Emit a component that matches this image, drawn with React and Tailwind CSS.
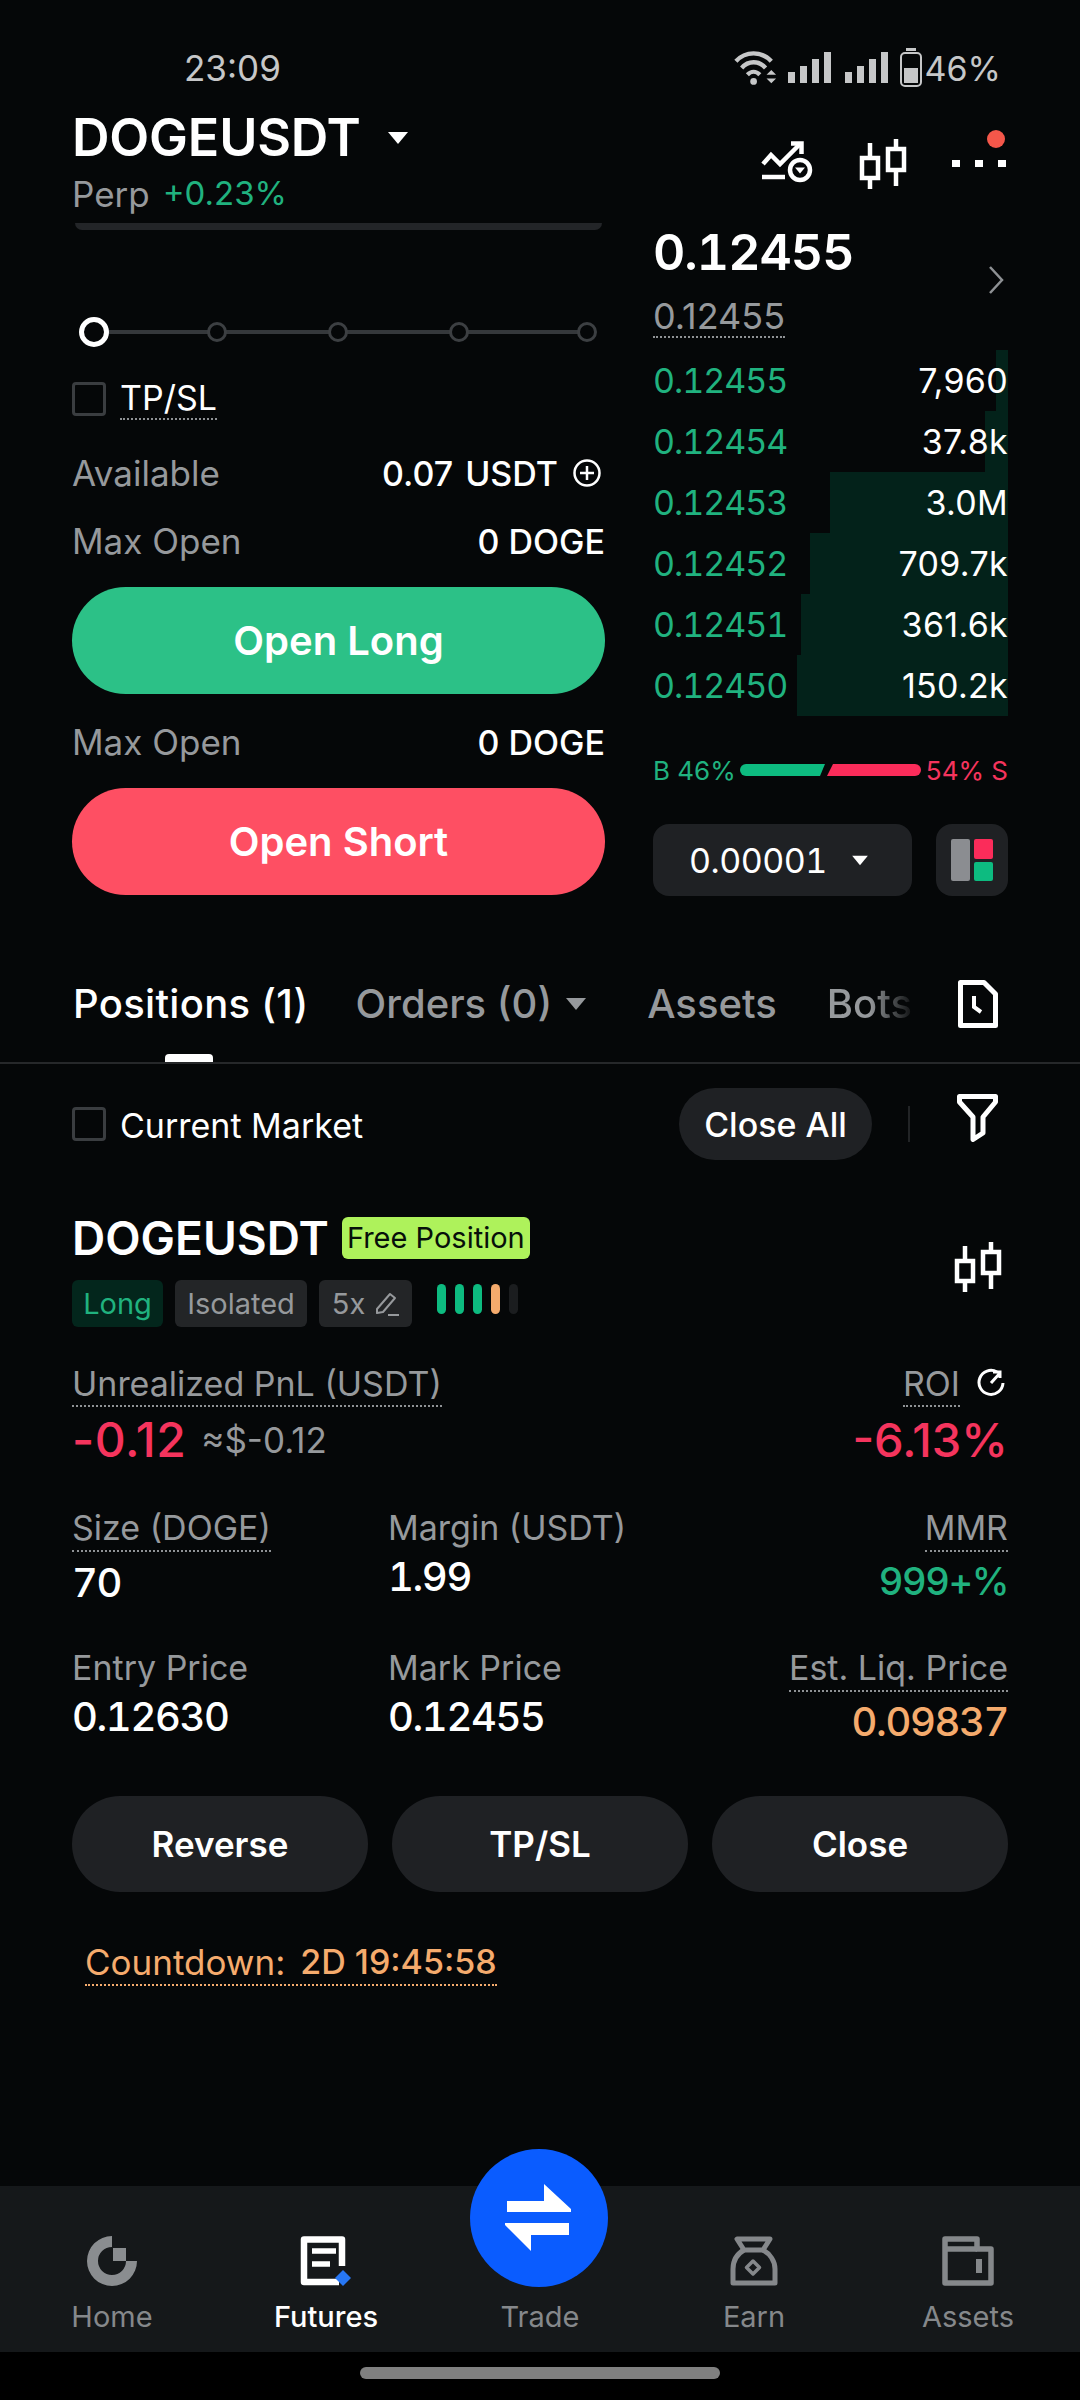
const Caret = ({ className, w = 22, h = 14, color = "#fff" }) => (
  <svg className={className} width={w} height={h} viewBox="0 0 22 14">
    <path d="M1 1H21L11 13Z" fill={color} />
  </svg>
);

const Candles = ({ className }) => (
  <svg className={className} width="48" height="52" viewBox="0 0 48 52" fill="none" stroke="#fff" strokeWidth="4.5">
    <rect x="3" y="20" width="16" height="20" />
    <path d="M11 5V20M11 40V51" />
    <rect x="29" y="11" width="16" height="21" />
    <path d="M37 1V11M37 32V48" />
  </svg>
);

const Check = () => <span className="block w-[34px] h-[34px] rounded-[4px] border-[3px] border-[#3a3d40]" />;

const Dotted = ({ children, className = "" }) => (
  <span className={`border-b-2 border-dotted border-[#8f9295] ${className}`}>{children}</span>
);

const StatusBar = () => (
  <div className="h-[100px] pt-[36px] pl-[184px] pr-[79px] flex items-center justify-between text-[#c6c7c8] text-[35px]">
    <span>23:09</span>
    <div className="flex items-center">
      <svg width="44" height="36" viewBox="0 0 46 36" fill="none" stroke="#c6c7c8" strokeWidth="4.5">
        <path d="M2 11C12 0 29 0 39 11" />
        <path d="M8 18C15 10 26 10 33 18" />
        <path d="M14 25C18 21 23 21 27 25" />
        <circle cx="20.500" cy="32" r="3.500" fill="#c6c7c8" stroke="none" />
        <path d="M34 25L39 20L44 25ZM34 29L39 34L44 29Z" fill="#c6c7c8" stroke="none" />
      </svg>
      <svg className="ml-[10px]" width="44" height="32" viewBox="0 0 44 32" fill="#c6c7c8">
        <rect x="0" y="20" width="7" height="11" /><rect x="12" y="14" width="7" height="17" />
        <rect x="24" y="7" width="7" height="24" /><rect x="36" y="0" width="7" height="31" />
      </svg>
      <svg className="ml-[13px]" width="44" height="32" viewBox="0 0 44 32" fill="#c6c7c8">
        <rect x="0" y="20" width="7" height="11" /><rect x="12" y="14" width="7" height="17" />
        <rect x="24" y="7" width="7" height="24" /><rect x="36" y="0" width="7" height="31" />
      </svg>
      <svg className="ml-[11px]" width="22" height="40" viewBox="0 0 22 40" fill="none">
        <rect x="6" y="0" width="10" height="3" fill="#c6c7c8" />
        <rect x="1" y="5" width="20" height="33" rx="4" stroke="#c6c7c8" strokeWidth="2" />
        <rect x="4" y="20" width="14" height="15" fill="#c6c7c8" />
      </svg>
      <span className="ml-[3px] text-[34px]">46%</span>
    </div>
  </div>
);

const Header = () => (
  <div className="h-[123px] px-[72px] flex justify-between">
    <div className="flex flex-col">
      <div className="h-[76px] flex items-center">
        <span className="text-[52px] font-semibold text-white tracking-[-0.2px]">DOGEUSDT</span>
        <Caret className="ml-[26px]" />
      </div>
      <div className="h-[38px] flex items-center mt-[-1px]">
        <span className="text-[35px] text-[#96999c]">Perp</span>
        <span className="ml-[13px] text-[33px] text-[#20b27f]">+0.23%</span>
      </div>
    </div>
    <div className="relative h-[95px] w-[247px]">
      <svg className="absolute left-0 top-[41px]" width="54" height="44" viewBox="0 0 54 44" fill="none" stroke="#fff" strokeWidth="4.5">
        <path d="M2 23L10 14L19 23L39 3" />
        <path d="M30 2.500H40.500V13" />
        <path d="M1 36H24" />
        <circle cx="39" cy="29" r="10" />
        <path d="M34 26.500H44L39 32.500Z" fill="#fff" stroke="none" />
      </svg>
      <Candles className="absolute left-[98px] top-[38px]" />
      <div className="absolute left-[191px] top-[60px] flex gap-[15px]">
        <span className="w-[8px] h-[7px] bg-white" />
        <span className="w-[8px] h-[7px] bg-white" />
        <span className="w-[8px] h-[7px] bg-white" />
      </div>
      <span className="absolute left-[226px] top-[30px] w-[18px] h-[18px] rounded-full bg-[#f4574a]" />
    </div>
  </div>
);

const Stop = ({ className = "" }) => (
  <span className={`w-[20px] h-[20px] rounded-full border-[3px] border-[#3c3f42] bg-[#050708] relative ${className}`} />
);

const Line = ({ label, children, className = "" }) => (
  <div className={`flex items-center justify-between text-[34px] ${className}`}>
    <span className="text-[35px] text-[#96999c]">{label}</span>
    {children}
  </div>
);

const LeftColumn = () => (
  <div className="w-[533px]">
    <div className="h-[7px] mx-[3px] rounded-b-[8px] bg-[#232528]" />
    <div className="relative h-[30px] mt-[87px] flex items-center pl-[7px]">
      <div className="absolute left-[20px] right-[10px] h-[4px] bg-[#35383b]" />
      <span className="w-[30px] h-[30px] rounded-full border-[5px] border-white bg-[#050708] relative" />
      <Stop className="ml-[98px]" />
      <Stop className="ml-[101px]" />
      <Stop className="ml-[101px]" />
      <Stop className="ml-[108px]" />
    </div>
    <div className="h-[38px] mt-[33px] flex items-center gap-[14px]">
      <Check />
      <Dotted className="text-white text-[34px] leading-[40px]">TP/SL</Dotted>
    </div>
    <Line label="Available" className="h-[40px] mt-[35px]">
      <div className="flex items-center text-white font-medium">
        <span>0.07</span>
        <span className="ml-[12px]">USDT</span>
        <svg className="ml-[14px] mr-[3px]" width="30" height="30" viewBox="0 0 30 30" fill="none" stroke="#fff" strokeWidth="2.500">
          <circle cx="15" cy="15" r="12.500" /><path d="M15 8V22M8 15H22" />
        </svg>
      </div>
    </Line>
    <Line label="Max Open" className="h-[40px] mt-[28px]">
      <span className="text-white font-medium">0 DOGE</span>
    </Line>
    <button className="w-full h-[107px] mt-[26px] rounded-full bg-[#2cc187] text-white text-[40px] font-semibold">Open Long</button>
    <Line label="Max Open" className="h-[40px] mt-[28px]">
      <span className="text-white font-medium">0 DOGE</span>
    </Line>
    <button className="w-full h-[107px] mt-[26px] rounded-full bg-[#fe4f63] text-white text-[40px] font-semibold">Open Short</button>
  </div>
);

const bookRows = [
  ["0.12455", "7,960", "w-[12px]"],
  ["0.12454", "37.8k", "w-[23px]"],
  ["0.12453", "3.0M", "w-[178px]"],
  ["0.12452", "709.7k", "w-[198px]"],
  ["0.12451", "361.6k", "w-[207px]"],
  ["0.12450", "150.2k", "w-[211px]"],
];

const RightColumn = () => (
  <div className="w-[355px] ml-[48px]">
    <div className="relative">
      <div className="text-[50px] leading-[58px] font-semibold text-white tabular-nums tracking-[-1px]">0.12455</div>
      <svg className="absolute right-[4px] top-[43px]" width="16" height="28" viewBox="0 0 16 28" fill="none" stroke="#8e9194" strokeWidth="2.500">
        <path d="M2 1L14 14L2 27" />
      </svg>
      <div className="mt-[15px] h-[43px]">
        <Dotted className="inline-block text-[36px] leading-[40px] h-[42px] text-[#96999c]">0.12455</Dotted>
      </div>
    </div>
    <div className="mt-[11px]">
      {bookRows.map(([price, size, bar]) => (
        <div key={price} className="relative h-[61px] flex items-center justify-between text-[34px]">
          <div className={`absolute right-0 top-0 bottom-0 bg-[#03221a] ${bar}`} />
          <span className="relative text-[#20b27f] tabular-nums tracking-[-1px]">{price}</span>
          <span className="relative text-white tracking-[0.3px]">{size}</span>
        </div>
      ))}
    </div>
    <div className="h-[36px] mt-[36px] flex items-center justify-between text-[26px]">
      <span className="text-[#20b27f]">B 46%</span>
      <svg width="181" height="12" viewBox="0 0 181 12">
        <path d="M6 0H85L80 12H6A6 6 0 0 1 6 0Z" fill="#0dbb80" />
        <path d="M93 0H175A6 6 0 0 1 175 12H87Z" fill="#fb2c5a" />
      </svg>
      <span className="text-[#f5345d]">54% S</span>
    </div>
    <div className="mt-[36px] flex justify-between">
      <div className="w-[259px] h-[72px] rounded-[16px] bg-[#1f2124] flex items-center pl-[36px] text-white text-[34px] tracking-[-0.5px] tabular-nums">
        <span>0.00001</span>
        <Caret className="ml-[24px]" w={18} h={11} />
      </div>
      <div className="w-[72px] h-[72px] rounded-[16px] bg-[#1f2124] flex items-center justify-center gap-[4px]">
        <span className="w-[19px] h-[42px] rounded-[2px] bg-[#8b8d91]" />
        <div className="flex flex-col justify-between h-[42px]">
          <span className="block w-[19px] h-[20px] rounded-[2px] bg-[#fb2c5a]" />
          <span className="block w-[19px] h-[19px] rounded-[2px] bg-[#0dbb80]" />
        </div>
      </div>
    </div>
  </div>
);

const Tabs = () => (
  <div className="relative h-[101px] mt-[67px] border-b-2 border-[#26282a]">
    <div className="h-[82px] pl-[73px] pr-[82px] flex items-center text-[40px] font-medium text-[#96999c]">
      <span className="text-white tracking-[0.3px]">Positions (1)</span>
      <span className="ml-[47px]">Orders (0)</span>
      <Caret className="ml-[13px]" w={22} h={14} color="#96999c" />
      <span className="ml-[60px]">Assets</span>
      <span className="ml-[50px] w-[84px] overflow-hidden bg-linear-to-r from-[#96999c] from-50% to-[#96999c]/10 bg-clip-text text-transparent">Bots</span>
      <svg className="ml-auto" width="40" height="48" viewBox="0 0 40 48" fill="none" stroke="#fff" strokeWidth="5">
        <path d="M2.500 2.500H26L37.500 14V45.500H2.500Z" strokeLinejoin="round" />
        <path d="M16 16V27L23 32" strokeWidth="4" />
      </svg>
    </div>
    <span className="absolute left-[165px] bottom-0 w-[48px] h-[8px] rounded-t-[4px] bg-white" />
  </div>
);

const Toolbar = () => (
  <div className="h-[72px] mt-[24px] pl-[72px] pr-[82px] flex items-center">
    <Check />
    <span className="ml-[14px] mt-[2px] text-white text-[34px]">Current Market</span>
    <span className="ml-auto w-[193px] h-[72px] rounded-full bg-[#1f2124] text-white text-[34px] font-medium flex items-center justify-center">Close All</span>
    <span className="ml-[36px] w-[2px] h-[36px] bg-[#222426]" />
    <svg className="ml-[47px] mt-[-12px]" width="41" height="48" viewBox="0 0 41 48" fill="none" stroke="#fff" strokeWidth="5">
      <path d="M2.500 2.500H38.500V8L26 23V39L16 45.500V23L2.500 8Z" strokeLinejoin="round" />
    </svg>
  </div>
);

const Tag = ({ className, children }) => (
  <span className={`h-[47px] rounded-[6px] flex items-center justify-center text-[29px] ${className}`}>{children}</span>
);

const Stat = ({ label, value, dotted, right, valueClass = "text-white text-[40px]", gap = "mt-[6px]" }) => (
  <div className={`flex flex-col ${right ? "items-end" : "items-start"}`}>
    {dotted ? (
      <Dotted className="text-[34px] leading-[44px] text-[#96999c]">{label}</Dotted>
    ) : (
      <span className="text-[34px] leading-[44px] text-[#96999c]">{label}</span>
    )}
    <span className={`leading-[50px] font-medium tabular-nums tracking-[-1.4px] ${gap} ${valueClass}`}>{value}</span>
  </div>
);

const Position = () => (
  <div className="px-[72px] mt-[57px]">
    <div className="flex items-center justify-between">
      <div>
        <div className="flex items-center h-[42px]">
          <span className="text-[46px] font-semibold text-white">DOGEUSDT</span>
          <span className="ml-[13px] w-[188px] h-[42px] rounded-[6px] bg-[#aef25b] text-[#07100a] text-[29px] flex items-center justify-center">Free Position</span>
        </div>
        <div className="flex items-center gap-[12px] mt-[21px]">
          <Tag className="w-[91px] bg-[#03261c] text-[#20b27f]">Long</Tag>
          <Tag className="w-[132px] bg-[#232527] text-[#96999c]">Isolated</Tag>
          <Tag className="w-[93px] bg-[#232527] text-[#96999c] gap-[10px]">
            <span>5x</span>
            <svg width="24" height="26" viewBox="0 0 24 26" fill="none" stroke="#96999c" strokeWidth="2">
              <path d="M2 18L15 3L20 7L8 21L2 22Z" strokeLinejoin="round" />
              <path d="M13 24H24" />
            </svg>
          </Tag>
          <div className="ml-[13px] mb-[10px] flex gap-[9px]">
            <span className="w-[9px] h-[30px] rounded-full bg-[#0dbb80]" />
            <span className="w-[9px] h-[30px] rounded-full bg-[#0dbb80]" />
            <span className="w-[9px] h-[30px] rounded-full bg-[#0dbb80]" />
            <span className="w-[9px] h-[30px] rounded-full bg-[#f5ab6d]" />
            <span className="w-[9px] h-[30px] rounded-full bg-[#1b1d1f]" />
          </div>
        </div>
      </div>
      <Candles className="mr-[6px] mt-[-10px]" />
    </div>

    <div className="mt-[36px] flex justify-between">
      <div className="flex flex-col items-start">
        <Dotted className="text-[34px] leading-[42px] text-[#96999c]">Unrealized PnL (USDT)</Dotted>
        <div className="flex items-center h-[56px] mt-[5px]">
          <span className="text-[48px] text-[#f5345d] font-medium tracking-[0.5px]">-0.12</span>
          <span className="ml-[15px] text-[35px] text-[#96999c]">≈$-0.12</span>
        </div>
      </div>
      <div className="flex flex-col items-end">
        <div className="flex items-center">
          <Dotted className="text-[34px] leading-[42px] text-[#96999c]">ROI</Dotted>
          <svg className="ml-[16px] mr-[2px] mb-[4px]" width="30" height="30" viewBox="0 0 30 30" fill="none" stroke="#fff" strokeWidth="3">
            <path d="M21 4A12 12 0 1 0 27 15" />
            <path d="M15 15L24 5M17 4H24V10" />
          </svg>
        </div>
        <span className="h-[56px] mt-[5px] flex items-center text-[47px] text-[#f5345d] font-medium">-6.13%</span>
      </div>
    </div>

    <div className="mt-[38px] grid grid-cols-[316px_1fr_auto] gap-y-[38px]">
      <Stat label="Size (DOGE)" value="70" dotted />
      <Stat label="Margin (USDT)" value="1.99" gap="mt-[2px]" />
      <Stat label="MMR" value="999+%" dotted right gap="mt-[4px]" valueClass="text-[#20b27f] text-[38px]" />
      <Stat label="Entry Price" value="0.12630" gap="mt-[2px]" />
      <Stat label="Mark Price" value="0.12455" gap="mt-[2px]" />
      <Stat label="Est. Liq. Price" value="0.09837" dotted right gap="mt-[5px]" valueClass="text-[#f5ab6d] text-[40px]" />
    </div>

    <div className="mt-[49px] flex gap-[24px]">
      {["Reverse", "TP/SL", "Close"].map((t) => (
        <button key={t} className="flex-1 h-[96px] rounded-full bg-[#1f2124] text-white text-[35px] font-semibold">{t}</button>
      ))}
    </div>

    <div className="mt-[48px] ml-[13px]">
      <Dotted className="inline-flex text-[34px] leading-[44px] text-[#f5ab6d] border-[#f5ab6d]">
        <span className="text-[35px]">Countdown:</span>
        <span className="ml-[15px] font-medium">2D 19:45:58</span>
      </Dotted>
    </div>
  </div>
);

const NavItem = ({ label, active, children }) => (
  <div className="w-[214px] flex flex-col items-center">
    <div className="h-[50px] flex items-center justify-center">{children}</div>
    <span className={`mt-[13px] text-[29px] leading-[36px] ${active ? "text-white font-medium" : "text-[#85888b]"}`}>{label}</span>
  </div>
);

const BottomNav = () => (
  <div className="relative mt-auto h-[166px] bg-[#15181a] pt-[50px] px-[5px] flex">
    <NavItem label="Home">
      <svg width="50" height="50" viewBox="0 0 50 50" fill="#8a8d90">
        <path d="M25 0A25 25 0 1 0 50 25H39A14 14 0 1 1 25 11Z" />
        <rect x="26" y="12" width="13" height="13" />
      </svg>
    </NavItem>
    <NavItem label="Futures" active>
      <svg width="52" height="50" viewBox="0 0 52 50" fill="none">
        <path d="M39 46H4V3.500H42V30" stroke="#fff" strokeWidth="6.500" strokeLinejoin="round" />
        <path d="M12 15H36M12 28H30" stroke="#fff" strokeWidth="5.500" />
        <path d="M43 34L51 42L43 50L35 42Z" fill="#2777f5" strokeLinejoin="round" />
      </svg>
    </NavItem>
    <NavItem label="Trade" />
    <NavItem label="Earn">
      <svg width="48" height="50" viewBox="0 0 48 50" fill="none" stroke="#85888b" strokeWidth="5" strokeLinejoin="round">
        <path d="M7 3H40L33 14H14Z" />
        <path d="M14 14C7 18 3 25 3 33V47H45V33C45 25 40 18 33 14" />
        <path d="M23 25L29.500 31.500L23 38L16.500 31.500Z" strokeWidth="3.500" />
      </svg>
    </NavItem>
    <NavItem label="Assets">
      <svg width="52" height="50" viewBox="0 0 52 50" fill="none" stroke="#85888b" strokeWidth="5.500" strokeLinejoin="round">
        <path d="M3 47V3H35V13H49V47Z" />
        <path d="M3 13H35" />
        <path d="M37 23V37" strokeWidth="6" />
      </svg>
    </NavItem>
    <div className="absolute left-[470px] top-[-37px] w-[138px] h-[138px] rounded-full bg-[#0a5cff] flex items-center justify-center">
      <svg width="68" height="68" viewBox="0 0 68 68" fill="#fff">
        <path d="M2 17H39V0L66 25V28H2Z" />
        <path d="M64 39V51H26V67L0 41V39Z" />
      </svg>
    </div>
  </div>
);

export default function App() {
  return (
    <div className="w-[1080px] h-[2400px] flex flex-col bg-[#050708] font-['Inter',sans-serif] overflow-hidden">
      <StatusBar />
      <Header />
      <div className="flex pl-[72px]">
        <LeftColumn />
        <RightColumn />
      </div>
      <Tabs />
      <Toolbar />
      <Position />
      <BottomNav />
      <div className="h-[48px] bg-black flex justify-center pt-[15px]">
        <span className="w-[360px] h-[12px] rounded-full bg-[#808080]" />
      </div>
    </div>
  );
}
